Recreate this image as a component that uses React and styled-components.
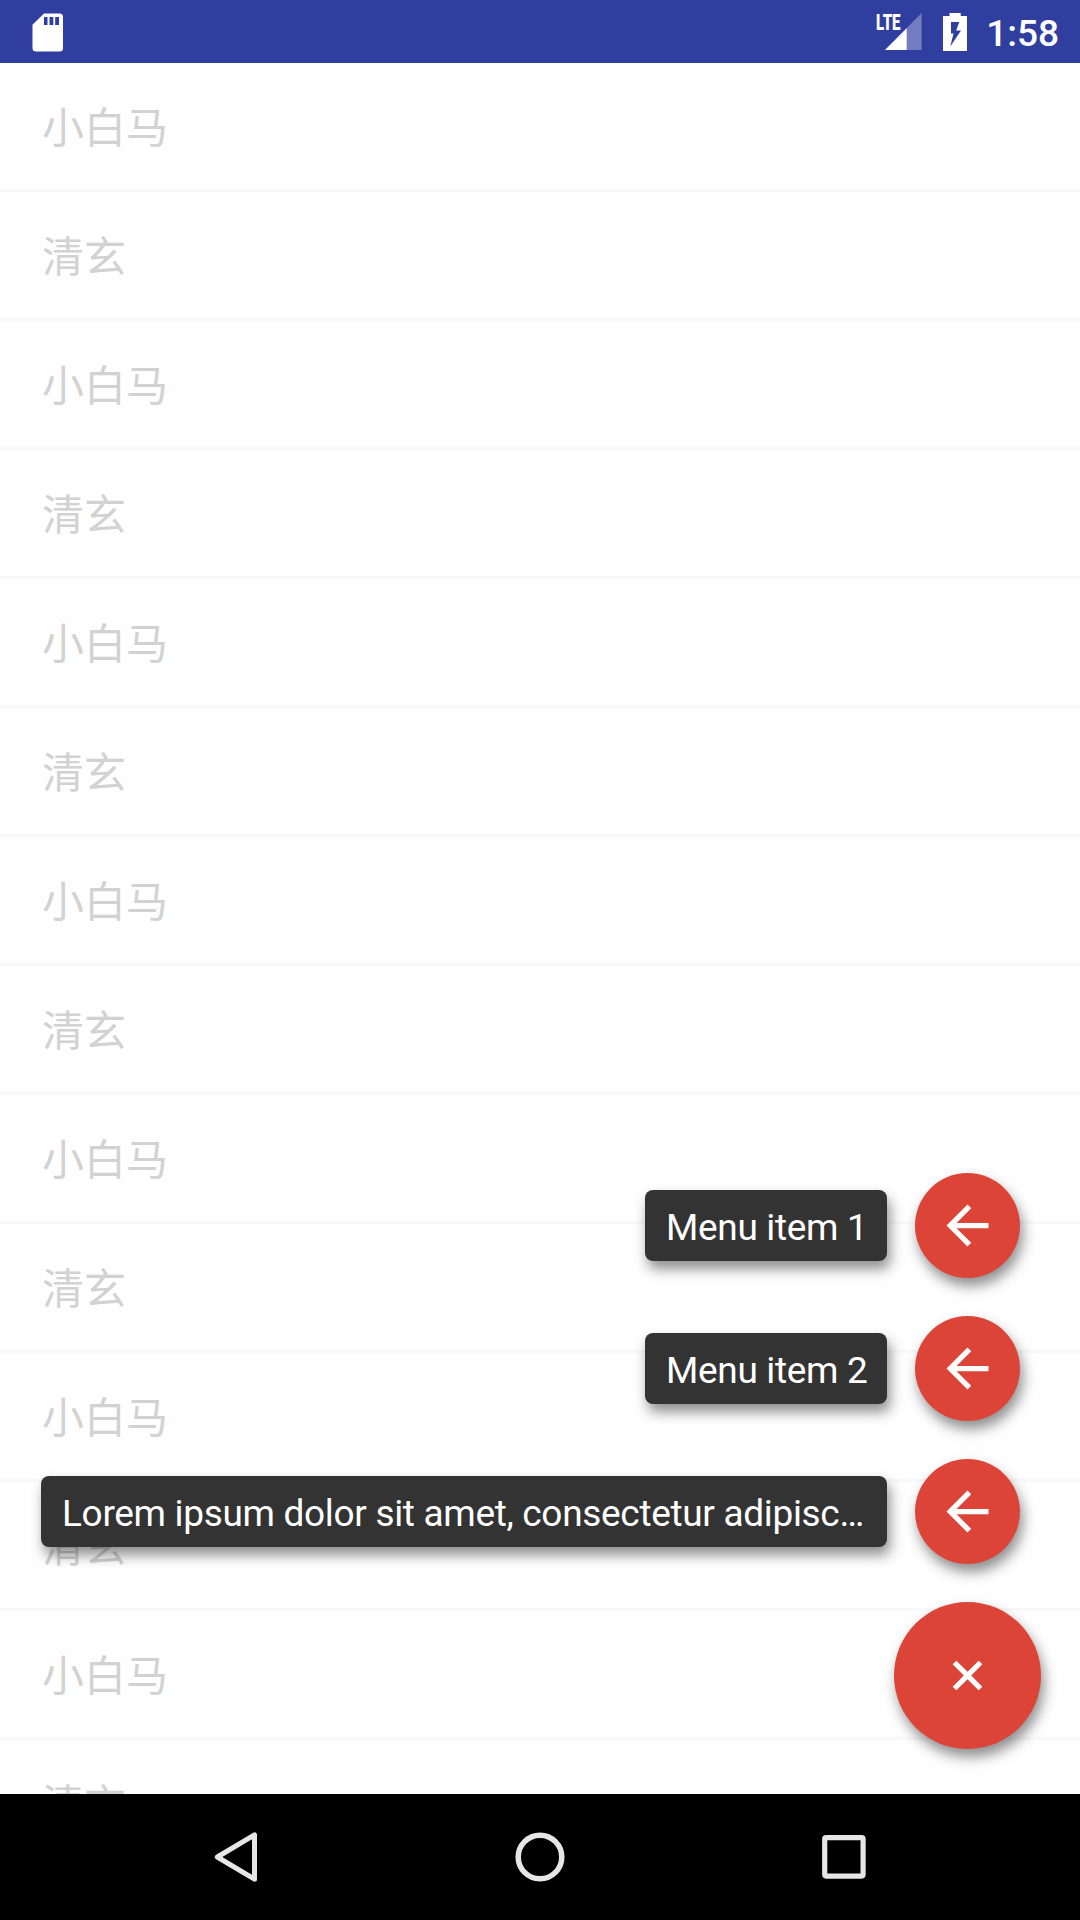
import React from 'react';
import styled, { createGlobalStyle } from 'styled-components';

const GlobalStyle = createGlobalStyle`
  body {
    margin: 0;
    background: #fefefe;
    font-family: Roboto, "Noto Sans CJK SC", sans-serif;
  }
`;

const Screen = styled.div`
  position: relative;
  display: flex;
  flex-direction: column;
  width: 1080px;
  height: 1920px;
  overflow: hidden;
  background: #fefefe;
`;

const StatusBar = styled.header`
  flex: none;
  display: flex;
  align-items: center;
  justify-content: space-between;
  height: 63px;
  box-sizing: border-box;
  padding: 0 21px 0 32px;
  background: #303f9f;
  color: #fff;
`;

const StatusIcons = styled.div`
  display: flex;
  align-items: center;
`;

const StatusIcon = styled.svg`
  display: block;
  overflow: visible;
  margin-right: ${(p) => p.$gap || 0}px;
`;

const Clock = styled.time`
  font-size: 37px;
  font-weight: 500;
  line-height: 43px;
  padding-top: 3px;
`;

const List = styled.ul`
  flex: 1;
  min-height: 0;
  margin: 0;
  padding: 0;
  list-style: none;
  overflow: hidden;
`;

const ListRow = styled.li`
  display: flex;
  align-items: center;
  height: 129px;
  box-sizing: border-box;
  padding: 0 0 4px 42px;
  border-bottom: 3px solid #f8f8f8;
  font-family: "Noto Sans CJK SC", sans-serif;
  font-size: 42px;
  color: #d2d2d2;
`;

const NavBar = styled.nav`
  flex: none;
  display: grid;
  grid-template-columns: repeat(3, 304px);
  justify-content: center;
  align-items: center;
  justify-items: center;
  height: 126px;
  background: #000;
`;

const FabMenu = styled.div`
  position: absolute;
  right: 39px;
  bottom: 171px;
  display: flex;
  flex-direction: column;
  align-items: flex-end;
  gap: 38px;
`;

const MenuRow = styled.div`
  display: flex;
  align-items: center;
  gap: 28px;
  padding-right: 21px;
`;

const MenuLabel = styled.span`
  box-sizing: border-box;
  width: ${(p) => p.$width}px;
  height: 71px;
  padding: 4px 0 0 21px;
  border-radius: 8px;
  background: #333;
  box-shadow: 3px 8px 13px rgba(0, 0, 0, 0.44);
  color: #fff;
  font-size: 37px;
  letter-spacing: -0.32px;
  line-height: 68px;
  white-space: nowrap;
`;

const Fab = styled.button`
  display: flex;
  align-items: center;
  justify-content: center;
  width: ${(p) => p.$size}px;
  height: ${(p) => p.$size}px;
  padding: 0;
  border: 0;
  border-radius: 50%;
  background: #db4437;
  box-shadow: 3px 8px 13px rgba(0, 0, 0, 0.44);
`;

const Icon = styled.svg`
  display: block;
  width: 63px;
  height: 63px;
  fill: #fff;
  transform: rotate(${(p) => p.$rotate || 0}deg);
`;

const names = Array.from({ length: 14 }, (_, i) => (i % 2 ? '清玄' : '小白马'));

const menuItems = [
  { text: 'Menu item 1', width: 242 },
  { text: 'Menu item 2', width: 242 },
  { text: 'Lorem ipsum dolor sit amet, consectetur adipisc…', width: 846 },
];

const SdCard = () => (
  <StatusIcon width="32" height="40" viewBox="0 0 32 40">
    <path
      fill="#fff"
      fillRule="evenodd"
      d="M12 1.5H27.5Q31 1.5 31 5V36Q31 39.5 27.5 39.5H4Q.5 39.5 .5 36V12.8ZM12 5V13H15.5V5ZM17.5 5V13H21.3V5ZM23.2 5V13H27V5Z"
    />
  </StatusIcon>
);

const Signal = () => (
  <StatusIcon width="46" height="38" viewBox="0 0 46 38" $gap={21}>
    <path fill="#fff" fillOpacity="0.32" d="M45.6 0V37H9Z" />
    <path fill="#fff" d="M30.7 15.2V37H9Z" />
    <text
      x="0"
      y="16.5"
      fill="#fff"
      fontFamily="Roboto"
      fontWeight="900"
      fontSize="21.5"
      textLength="24.5"
      lengthAdjust="spacingAndGlyphs"
    >
      LTE
    </text>
  </StatusIcon>
);

const Battery = () => (
  <StatusIcon width="24" height="38" viewBox="0 0 24 38" $gap={19}>
    <path
      fill="#fff"
      fillRule="evenodd"
      d="M6.5 0H17.7V3H24V38H0V3H6.5ZM8 9V20.5H10.5L7.3 33.5L18 17.5H13.2L16.3 9Z"
    />
  </StatusIcon>
);

const ArrowLeft = () => (
  <Icon viewBox="0 0 24 24">
    <path d="M20 11H7.83l5.59-5.59L12 4l-8 8 8 8 1.41-1.41L7.83 13H20v-2z" />
  </Icon>
);

export default function App() {
  return (
    <>
      <GlobalStyle />
      <Screen>
        <StatusBar>
          <SdCard />
          <StatusIcons>
            <Signal />
            <Battery />
            <Clock>1:58</Clock>
          </StatusIcons>
        </StatusBar>
        <List>
          {names.map((name, i) => (
            <ListRow key={i}>{name}</ListRow>
          ))}
        </List>
        <NavBar>
          <svg width="50" height="52" viewBox="0 0 50 52">
            <path
              d="M43.5 3.8V48.2L6.3 26Z"
              fill="none"
              stroke="#e6e6e6"
              strokeWidth="5"
              strokeLinejoin="round"
            />
          </svg>
          <svg width="52" height="52" viewBox="0 0 52 52">
            <circle cx="26" cy="26" r="21.8" fill="none" stroke="#e6e6e6" strokeWidth="5.5" />
          </svg>
          <svg width="52" height="52" viewBox="0 0 52 52">
            <rect x="6.7" y="6.7" width="38.4" height="38.4" rx="1.5" fill="none" stroke="#e6e6e6" strokeWidth="5.2" />
          </svg>
        </NavBar>
        <FabMenu>
          {menuItems.map(({ text, width }) => (
            <MenuRow key={text}>
              <MenuLabel $width={width}>{text}</MenuLabel>
              <Fab $size={105} aria-label={text}>
                <ArrowLeft />
              </Fab>
            </MenuRow>
          ))}
          <Fab $size={147} aria-label="Close menu">
            <Icon viewBox="0 0 24 24" $rotate={45}>
              <path d="M19 13h-6v6h-2v-6H5v-2h6V5h2v6h6v2z" />
            </Icon>
          </Fab>
        </FabMenu>
      </Screen>
    </>
  );
}
